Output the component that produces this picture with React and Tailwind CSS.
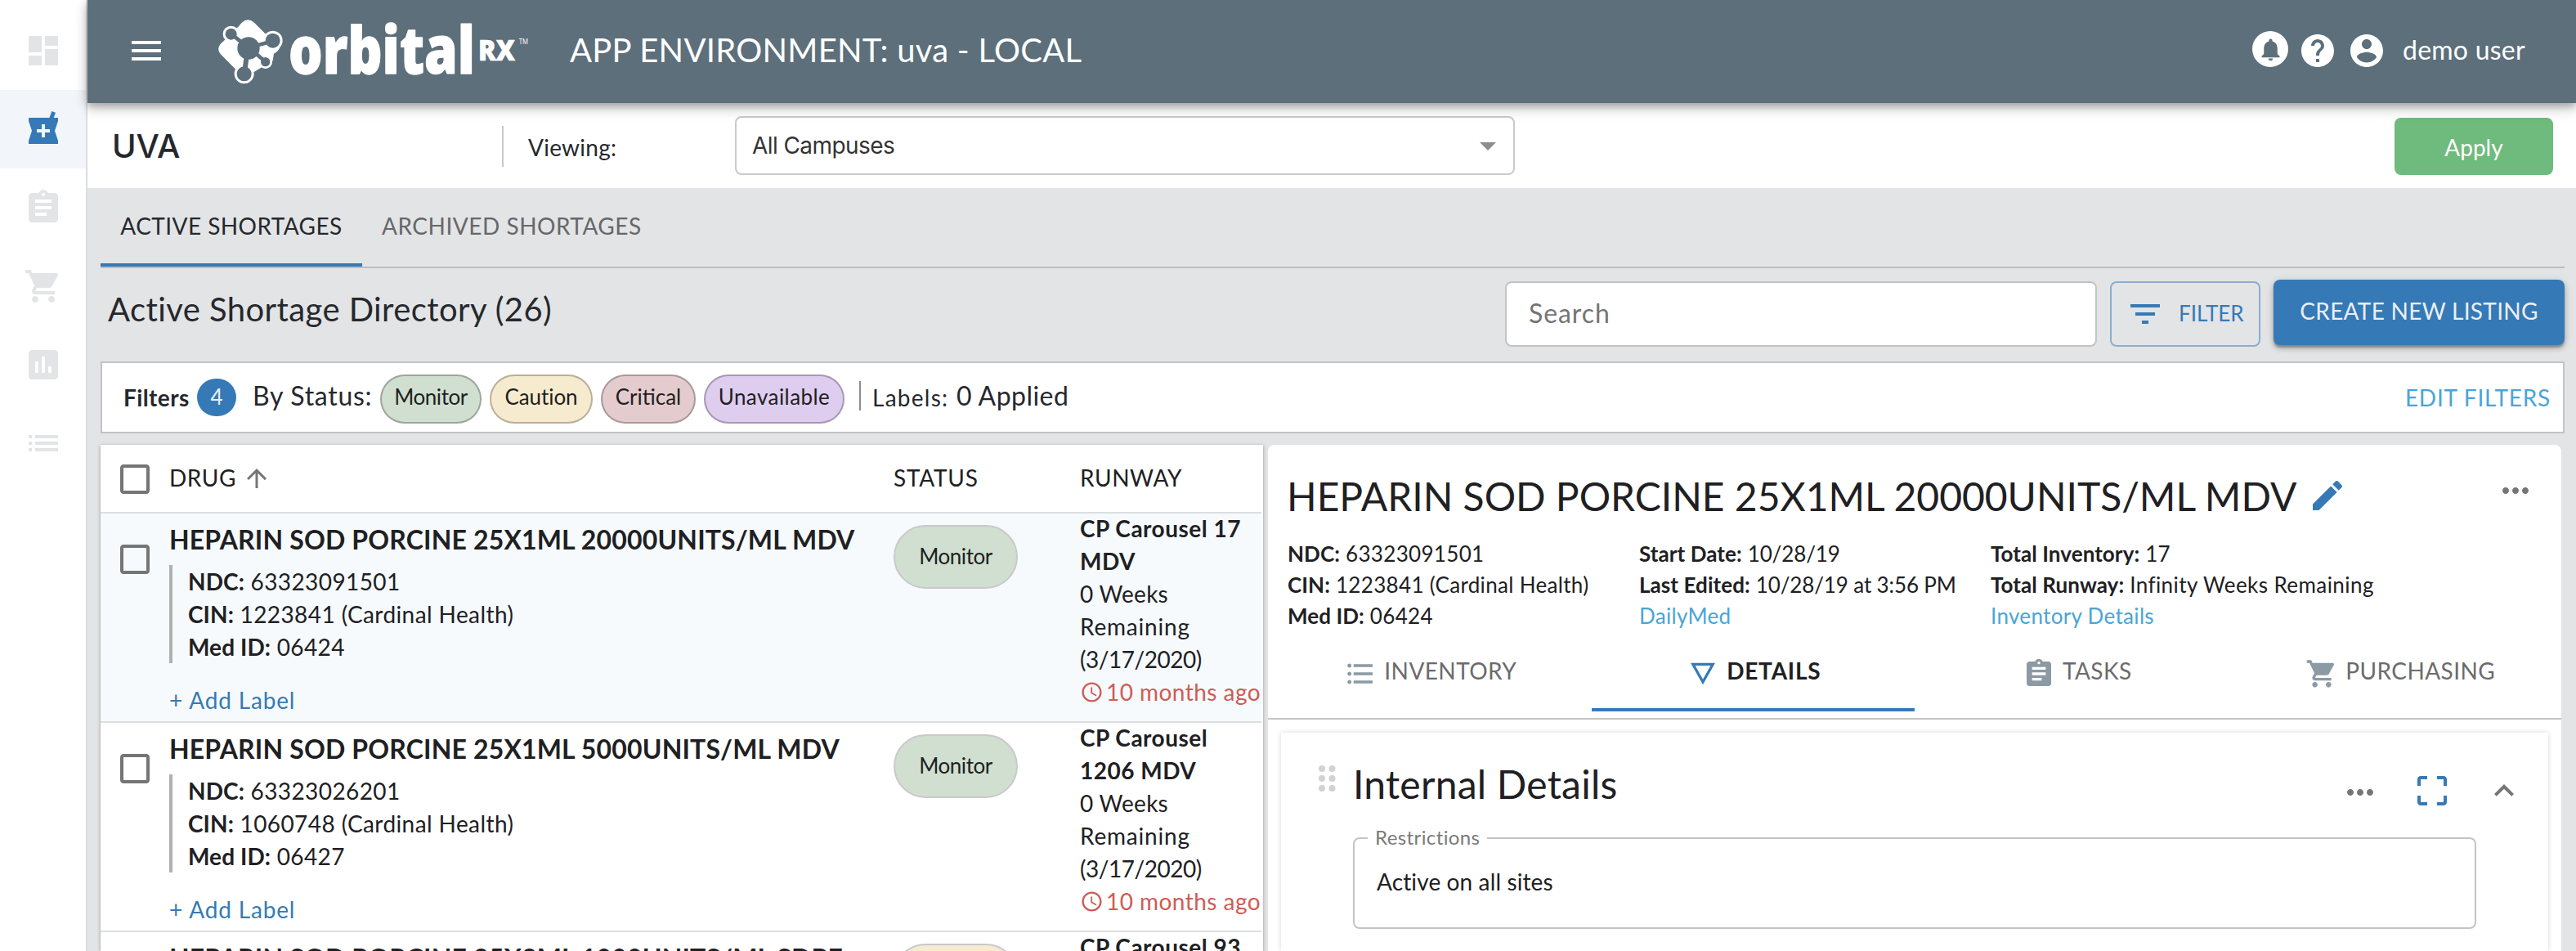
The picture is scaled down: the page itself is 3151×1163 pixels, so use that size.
import React from 'react';

const PATHS = {
  dashboard: 'M3 13h8V3H3v10zm0 8h8v-6H3v6zm10 0h8V11h-8v10zm0-18v6h8V3h-8z',
  pharmacy:
    'M21 5h-2.64l1.14-3.14L17.15 1l-1.46 4H3v2l2 6-2 6v2h18v-2l-2-6 2-6V5zm-5 9h-3v3h-2v-3H8v-2h3V9h2v3h3v2z',
  assignment:
    'M19 3h-4.18C14.4 1.84 13.3 1 12 1c-1.3 0-2.4.84-2.82 2H5c-1.1 0-2 .9-2 2v14c0 1.1.9 2 2 2h14c1.1 0 2-.9 2-2V5c0-1.1-.9-2-2-2zm-7 0c.55 0 1 .45 1 1s-.45 1-1 1-1-.45-1-1 .45-1 1-1zm2 14H7v-2h7v2zm3-4H7v-2h10v2zm0-4H7V7h10v2z',
  cart:
    'M7 18c-1.1 0-1.99.9-1.99 2S5.9 22 7 22s2-.9 2-2-.9-2-2-2zM1 2v2h2l3.6 7.59-1.35 2.45c-.16.28-.25.61-.25.96 0 1.1.9 2 2 2h12v-2H7.42c-.14 0-.25-.11-.25-.25l.03-.12.9-1.63h7.45c.75 0 1.41-.41 1.75-1.03l3.58-6.49c.08-.14.12-.31.12-.48 0-.55-.45-1-1-1H5.21l-.94-2H1zm16 16c-1.1 0-1.99.9-1.99 2s.89 2 1.99 2 2-.9 2-2-.9-2-2-2z',
  assessment:
    'M19 3H5c-1.1 0-2 .9-2 2v14c0 1.1.9 2 2 2h14c1.1 0 2-.9 2-2V5c0-1.1-.9-2-2-2zM9 17H7v-7h2v7zm4 0h-2V7h2v10zm4 0h-2v-4h2v4z',
  list: 'M3 13h2v-2H3v2zm0 4h2v-2H3v2zm0-8h2V7H3v2zm4 4h14v-2H7v2zm0 4h14v-2H7v2zM7 7v2h14V7H7z',
  menu: 'M3 18h18v-2H3v2zm0-5h18v-2H3v2zm0-7v2h18V6H3z',
  bell:
    'M12 22c1.1 0 2-.9 2-2h-4c0 1.1.89 2 2 2zm6-6v-5c0-3.07-1.64-5.64-4.5-6.32V4c0-.83-.67-1.5-1.5-1.5s-1.5.67-1.5 1.5v.68C7.63 5.36 6 7.92 6 11v5l-2 2v1h16v-1l-2-2z',
  help:
    'M12 2C6.48 2 2 6.48 2 12s4.48 10 10 10 10-4.48 10-10S17.52 2 12 2zm1 17h-2v-2h2v2zm2.07-7.75l-.9.92C13.45 12.9 13 13.5 13 15h-2v-.5c0-1.1.45-2.1 1.17-2.83l1.24-1.26c.37-.36.59-.86.59-1.41 0-1.1-.9-2-2-2s-2 .9-2 2H8c0-2.21 1.79-4 4-4s4 1.79 4 4c0 .88-.36 1.68-.93 2.25z',
  account:
    'M12 2C6.48 2 2 6.48 2 12s4.48 10 10 10 10-4.48 10-10S17.52 2 12 2zm0 3c1.66 0 3 1.34 3 3s-1.34 3-3 3-3-1.34-3-3 1.34-3 3-3zm0 14.2c-2.5 0-4.71-1.28-6-3.22.03-1.99 4-3.08 6-3.08 1.99 0 5.97 1.09 6 3.08-1.29 1.94-3.5 3.22-6 3.22z',
  caret: 'M7 10l5 5 5-5z',
  filter: 'M10 18h4v-2h-4v2zM3 6v2h18V6H3zm3 7h12v-2H6v2z',
  checkbox:
    'M19 5v14H5V5h14m0-2H5c-1.1 0-2 .9-2 2v14c0 1.1.9 2 2 2h14c1.1 0 2-.9 2-2V5c0-1.1-.9-2-2-2z',
  arrowUp: 'M4 12l1.41 1.41L11 7.83V20h2V7.83l5.58 5.59L20 12l-8-8-8 8z',
  clock:
    'M11.99 2C6.47 2 2 6.48 2 12s4.47 10 9.99 10C17.52 22 22 17.52 22 12S17.52 2 11.99 2zM12 20c-4.42 0-8-3.58-8-8s3.58-8 8-8 8 3.58 8 8-3.58 8-8 8zM12.5 7H11v6l5.25 3.15.75-1.23-4.5-2.67z',
  edit:
    'M3 17.25V21h3.75L17.81 9.94l-3.75-3.75L3 17.25zM20.71 7.04c.39-.39.39-1.02 0-1.41l-2.34-2.34c-.39-.39-1.02-.39-1.41 0l-1.83 1.83 3.75 3.75 1.83-1.83z',
  more:
    'M6 10c-1.1 0-2 .9-2 2s.9 2 2 2 2-.9 2-2-.9-2-2-2zm12 0c-1.1 0-2 .9-2 2s.9 2 2 2 2-.9 2-2-.9-2-2-2zm-6 0c-1.1 0-2 .9-2 2s.9 2 2 2 2-.9 2-2-.9-2-2-2z',
  bulleted:
    'M4 10.5c-.83 0-1.5.67-1.5 1.5s.67 1.5 1.5 1.5 1.5-.67 1.5-1.5-.67-1.5-1.5-1.5zm0-6c-.83 0-1.5.67-1.5 1.5S3.17 7.5 4 7.5 5.5 6.83 5.5 6 4.83 4.5 4 4.5zm0 12c-.83 0-1.5.68-1.5 1.5s.68 1.5 1.5 1.5 1.5-.68 1.5-1.5-.67-1.5-1.5-1.5zM7 19h14v-2H7v2zm0-6h14v-2H7v2zm0-8v2h14V5H7z',
  details: 'M3 4l9 16 9-16H3zm3.38 2h11.25L12 16 6.38 6z',
  cropFree:
    'M3 5v4h2V5h4V3H5c-1.1 0-2 .9-2 2zm2 10H3v4c0 1.1.9 2 2 2h4v-2H5v-4zm14 4h-4v2h4c1.1 0 2-.9 2-2v-4h-2v4zm0-16h-4v2h4v4h2V5c0-1.1-.9-2-2-2z',
  expandLess: 'M12 8l-6 6 1.41 1.41L12 10.83l4.59 4.58L18 14z',
};

function Icon({ name, className = 'size-12' }) {
  return (
    <svg viewBox="0 0 24 24" fill="currentColor" className={`shrink-0 ${className}`}>
      <path d={PATHS[name]} />
    </svg>
  );
}

function Logo() {
  return (
    <svg viewBox="0 0 1200 315" className="h-[105px] w-[400px] shrink-0" fill="#fff">
      <path d="M122 50Q145 30 168 50L214 96L262 140Q258 154 240 164L236 190L166 232L100 222L44 165Q29 147 44 128L66 108L112 62Z" />
      <circle cx="83" cy="92" r="30" />
      <circle cx="236" cy="116" r="36" />
      <circle cx="209" cy="194" r="25" />
      <circle cx="131" cy="238" r="36" />
      <g fill="#5c6f7b" stroke="#5c6f7b">
        <circle cx="147" cy="144" r="41" stroke="none" />
        <circle cx="83" cy="92" r="21" stroke="none" />
        <circle cx="236" cy="116" r="27" stroke="none" />
        <circle cx="209" cy="194" r="17" stroke="none" />
        <circle cx="131" cy="238" r="27" stroke="none" />
        <path d="M90 97L122 122M175 134L225 121M172 162L203 188" strokeWidth="14" />
        <path d="M139 180L134 220" strokeWidth="18" />
      </g>
      <text x="294" y="237" fontFamily="Open Sans" fontWeight="800" fontSize="238" textLength="684" lengthAdjust="spacingAndGlyphs" stroke="#fff" strokeWidth="4" strokeLinejoin="round">
        orbital
      </text>
      <text x="990" y="188" fontFamily="Open Sans" fontWeight="800" fontSize="106" textLength="135" lengthAdjust="spacingAndGlyphs" stroke="#fff" strokeWidth="2">
        RX
      </text>
      <text x="1139" y="128" fontFamily="Open Sans" fontSize="25" textLength="34" lengthAdjust="spacingAndGlyphs">
        TM
      </text>
    </svg>
  );
}

const NAV = ['dashboard', 'pharmacy', 'assignment', 'cart', 'assessment', 'list'];

function Sidebar() {
  return (
    <nav className="flex w-[107px] shrink-0 flex-col border-r-2 border-[#dcdddf] bg-white pt-[14px]">
      {NAV.map((name) => (
        <div
          key={name}
          className={`flex h-24 items-center justify-center ${
            name === 'pharmacy' ? 'bg-[#f2f6fa] text-[#357ab6]' : 'text-[#e3e4e6]'
          }`}
        >
          <Icon name={name} />
        </div>
      ))}
    </nav>
  );
}

function Header() {
  return (
    <header className="z-10 flex h-[126px] shrink-0 items-center bg-[#5c6f7b] pl-12 text-white shadow-[0_4px_8px_rgba(0,0,0,0.2),0_8px_16px_rgba(0,0,0,0.14),0_2px_16px_rgba(0,0,0,0.12)]">
      <Icon name="menu" className="mb-[2px] size-12" />
      <div className="ml-[52px]">
        <Logo />
      </div>
      <h1 className="ml-[42px] pb-[5px] text-[40px] leading-[48px] tracking-[0.0062em] whitespace-nowrap">
        APP ENVIRONMENT: uva - LOCAL
      </h1>
      <div className="ml-auto flex items-center pr-[61px]">
        <div className="mb-[6px] flex size-11 items-center justify-center rounded-full bg-white text-[#5c6f7b]">
          <Icon name="bell" className="size-[33px]" />
        </div>
        <Icon name="help" className="mb-[2px] ml-3 size-12" />
        <Icon name="account" className="mb-[2px] ml-3 size-12" />
        <span className="ml-[20px] w-[151px] pb-[5px] text-[32px] leading-10 tracking-[0.0076em] whitespace-nowrap">demo user</span>
      </div>
    </header>
  );
}

function Toolbar() {
  return (
    <div className="flex h-[104px] shrink-0 items-center bg-white text-[28px]">
      <div className="ml-[30px] w-[477px] pt-[2px] font-['Inter'] text-[40px] leading-[48px] font-medium text-[#25282d]">UVA</div>
      <div className="mt-[2px] h-[50px] w-[2px] bg-[#c8c9cb]" />
      <div className="ml-[30px] w-[253px] pt-[3px] tracking-[0.009em] text-[#25282d]">Viewing:</div>
      <div className="flex h-[72px] w-[954px] items-center justify-between rounded-lg border-2 border-[#cacaca] pr-[7px] pl-[19px] text-[#333]">
        <span className="font-['Inter'] tracking-[-0.0203em]">All Campuses</span>
        <Icon name="caret" className="size-12 text-[#8d8d8d]" />
      </div>
      <button className="mt-[2px] mr-7 ml-auto h-[70px] w-[194px] rounded-lg bg-[#6fba7d] pt-px text-white">Apply</button>
    </div>
  );
}

function PageTabs() {
  return (
    <div className="flex h-[98px] border-b-2 border-[#bcbdbf] text-[28px] whitespace-nowrap">
      <div className="flex w-[320px] items-center justify-center border-b-4 border-[#357ab6] tracking-[0.0152em] text-[#25282d]">
        ACTIVE SHORTAGES
      </div>
      <div className="flex items-center border-b-4 border-transparent pl-6 tracking-[0.0183em] text-[#66676a]">
        ARCHIVED SHORTAGES
      </div>
    </div>
  );
}

function DirectoryBar() {
  return (
    <div className="flex h-[114px] items-start whitespace-nowrap">
      <h2 className="pt-[25px] pl-[9px] text-[40px] leading-[50px] tracking-[0.0104em] text-[#25282d]">
        Active Shortage Directory (26)
      </h2>
      <div className="mt-4 ml-auto flex h-20 w-[724px] items-center rounded-lg border-2 border-[#c3c3c5] bg-white pb-[2px] pl-[27px] text-[32px] tracking-[0.029em] text-[#757575]">
        Search
      </div>
      <button className="mt-4 ml-4 flex h-20 w-[184px] items-center rounded-lg border-2 border-[#8aaed1] pl-[17px] text-[26px] text-[#357ab6]">
        <Icon name="filter" />
        <span className="ml-[17px] pb-[2px]">FILTER</span>
      </button>
      <button className="mt-[14px] ml-4 h-20 w-[356px] rounded-lg bg-[#357ab6] pb-[4px] text-[28px] tracking-[0.0102em] text-[#eceef1] shadow-[0_3px_2px_rgba(0,0,0,0.22),0_4px_6px_rgba(0,0,0,0.2),0_2px_12px_rgba(0,0,0,0.12)]">
        CREATE NEW LISTING
      </button>
    </div>
  );
}

function FilterBar() {
  const chip = 'mt-1 flex h-[60px] items-center justify-center rounded-full border-2 border-black/25 pb-[6px] text-[26px] text-[#1f1f1f]';
  return (
    <div className="flex h-[88px] items-center border-2 border-[#c3c3c5] bg-white pl-[26px] text-[#25282d] whitespace-nowrap">
      <span className="w-[90px] text-[28px] font-bold tracking-[0.0146em]">Filters</span>
      <span className="flex h-[46px] w-12 items-center justify-center rounded-full bg-[#357ab6] pb-[2px] text-[26px] text-[#e8eef4]">4</span>
      <span className="ml-[20px] w-[156px] pb-[4px] text-[32px] leading-10 tracking-[0.022em]">By Status:</span>
      <span className={`${chip} w-[124px] bg-[#d0dfd0] tracking-[-0.018em]`}>Monitor</span>
      <span className={`${chip} ml-[10px] w-[126px] bg-[#f6ebce] tracking-[-0.0035em]`}>Caution</span>
      <span className={`${chip} ml-[10px] w-[116px] bg-[#e4cbcd]`}>Critical</span>
      <span className={`${chip} ml-[10px] w-[172px] bg-[#decdee] tracking-[0.0168em]`}>Unavailable</span>
      <span className="mb-1 ml-[18px] h-9 w-[2px] bg-[#8c8d90]" />
      <span className="ml-[14px] w-[103px] pb-px text-[28px] tracking-[0.045em]">Labels:</span>
      <span className="pb-[4px] text-[32px] leading-10 tracking-[0.0142em]">0 Applied</span>
      <span className="mr-[15px] ml-auto pb-px text-[28px] tracking-[0.027em] text-[#4aa5d6]">EDIT FILTERS</span>
    </div>
  );
}

const DRUGS = [
  {
    title: 'HEPARIN SOD PORCINE 25X1ML 20000UNITS/ML MDV',
    ndc: '63323091501', cin: '1223841 (Cardinal Health)', med: '06424',
    status: 'Monitor', runway: ['CP Carousel 17', 'MDV'], selected: true,
  },
  {
    title: 'HEPARIN SOD PORCINE 25X1ML 5000UNITS/ML MDV',
    ndc: '63323026201', cin: '1060748 (Cardinal Health)', med: '06427',
    status: 'Monitor', runway: ['CP Carousel', '1206 MDV'],
  },
  {
    title: 'HEPARIN SOD PORCINE 25X2ML 1000UNITS/ML SDPF',
    status: 'Caution', runway: ['CP Carousel 93'],
  },
];

function Field({ label, children }) {
  return (
    <div>
      <b className="tracking-[0.003em]">{label}:</b> {children}
    </div>
  );
}

function DrugRow({ drug }) {
  return (
    <div
      className={`flex h-64 w-[1420px] shrink-0 items-start border-b-2 border-[#dcdee0] pl-[18px] text-[28px] leading-10 whitespace-nowrap ${
        drug.selected ? 'bg-[#f6fafd]' : 'bg-white'
      }`}
    >
      <Icon name="checkbox" className="mt-8 size-12 text-[#757575]" />
      <div className="ml-[18px] w-[886px] pt-3">
        <div className="text-[32px] leading-10 font-bold tracking-[0.0048em]">{drug.title}</div>
        {drug.ndc && (
          <>
            <div className="mt-3 h-[120px] border-l-4 border-[#b0b0b0] pl-[19px] tracking-[0.0145em]">
              <div className="-mt-px">
                <Field label="NDC">{drug.ndc}</Field>
                <Field label="CIN">{drug.cin}</Field>
                <Field label="Med ID">{drug.med}</Field>
              </div>
            </div>
            <div className="mt-[25px] tracking-[0.03em] text-[#357ab6]">+ Add Label</div>
          </>
        )}
      </div>
      <div className="w-[228px] pt-[14px]">
        <div
          className={`flex h-[78px] w-[152px] items-center justify-center rounded-full border-2 border-[#c9c9ca] pb-[3px] text-[26px] tracking-[-0.018em] ${
            drug.status === 'Monitor' ? 'bg-[#d0dfd0]' : 'bg-[#f6ebce]'
          }`}
        >
          {drug.ndc && drug.status}
        </div>
      </div>
      <div className="-mt-[2px]">
        {drug.runway.map((line) => (
          <div key={line} className="font-bold tracking-[0.0177em]">
            {line}
          </div>
        ))}
        {drug.ndc && (
          <>
            <div className="tracking-[0.008em]">0 Weeks</div>
            <div className="tracking-[0.0288em]">Remaining</div>
            <div className="tracking-[-0.0165em]">(3/17/2020)</div>
            <div className="flex items-center tracking-[0.0164em] text-[#cf5c55]">
              <Icon name="clock" className="mt-px size-[29px]" />
              <span className="ml-[3px]">10 months ago</span>
            </div>
          </>
        )}
      </div>
    </div>
  );
}

function DrugList() {
  return (
    <section className="flex w-[1422px] shrink-0 flex-col overflow-hidden bg-white text-[#202022] shadow-[0_1px_4px_rgba(0,0,0,0.35)]">
      <div className="flex h-[84px] w-[1420px] shrink-0 items-center border-b-2 border-[#dcdee0] pl-[18px] text-[28px]">
        <Icon name="checkbox" className="mt-[2px] size-12 text-[#757575]" />
        <span className="ml-[18px] w-[84px] pb-[2px] tracking-[0.02em]">DRUG</span>
        <Icon name="arrowUp" className="ml-[5px] size-9 text-[#757575]" />
        <span className="mr-auto ml-[761px] w-[228px] pb-[2px] tracking-[0.0273em]">STATUS</span>
        <span className="w-[222px] pb-[2px] tracking-[0.02em]">RUNWAY</span>
      </div>
      {DRUGS.map((d) => (
        <DrugRow key={d.title} drug={d} />
      ))}
    </section>
  );
}

const DETAIL_TABS = [
  ['bulleted', 'INVENTORY'],
  ['details', 'DETAILS'],
  ['assignment', 'TASKS'],
  ['cart', 'PURCHASING'],
];

function DetailPanel() {
  return (
    <section className="flex w-[1582px] shrink-0 flex-col rounded-t-lg bg-white text-[#202022]">
      <div className="h-[336px] shrink-0 border-b-2 border-[#c4c4c4] whitespace-nowrap">
        <div className="flex h-[114px] items-start pt-[31px] pl-[23px]">
          <h2 className="pt-[2px] text-[48px] leading-[60px] tracking-[-0.0003em]">HEPARIN SOD PORCINE 25X1ML 20000UNITS/ML MDV</h2>
          <Icon name="edit" className="mt-[7px] ml-[14px] size-12 text-[#357ab6]" />
          <Icon name="more" className="mt-[1px] mr-[32px] ml-auto size-12 text-[#757575]" />
        </div>
        <div className="flex pl-6 text-[26px] leading-[38px] tracking-[0.0125em]">
          <div className="w-[430px]">
            <Field label="NDC">63323091501</Field>
            <Field label="CIN">1223841 (Cardinal Health)</Field>
            <Field label="Med ID">06424</Field>
          </div>
          <div className="w-[430px]">
            <Field label="Start Date"><span className="tracking-[-0.005em]">10/28/19</span></Field>
            <Field label="Last Edited"><span className="tracking-[-0.005em]">10/28/19 at 3:56 PM</span></Field>
            <div className="text-[#4aa5d6]">DailyMed</div>
          </div>
          <div>
            <Field label="Total Inventory">17</Field>
            <Field label="Total Runway"><span className="tracking-[0.0165em]">Infinity Weeks Remaining</span></Field>
            <div className="text-[#4aa5d6]">Inventory Details</div>
          </div>
        </div>
        <div className="mt-[10px] flex h-[88px] text-[28px]">
          {DETAIL_TABS.map(([icon, label]) => {
            const active = icon === 'details';
            return (
              <div
                key={label}
                className={`flex w-[396px] items-center justify-center gap-[9px] border-b-4 pl-[2px] ${
                  active ? 'border-[#357ab6] font-bold' : 'border-transparent'
                }`}
              >
                <Icon name={icon} className={active ? 'size-10 text-[#357ab6]' : 'size-10 text-[#8b9aa3]'} />
                <span className={active ? 'pb-[8px] tracking-[0.0267em]' : 'pb-[8px] tracking-[0.015em] text-[#6b6b6b]'}>{label}</span>
              </div>
            );
          })}
        </div>
      </div>
      <div className="mx-4 mt-4 grow bg-white shadow-[0_0_6px_rgba(0,0,0,0.16)]">
        <div className="flex h-[116px] items-start pt-[31px] pr-[30px] pl-[46px]">
          <svg viewBox="0 0 21 32" className="mt-[9px] h-8 w-[21px]" fill="#d2d2d2">
            {[4, 16, 28].map((y) => (
              <g key={y}>
                <circle cx="4" cy={y} r="4" />
                <circle cx="16.5" cy={y} r="4" />
              </g>
            ))}
          </svg>
          <h3 className="ml-[21px] pt-[2px] text-[48px] leading-[60px] tracking-[0.005em]">Internal Details</h3>
          <div className="mt-[15px] ml-auto flex items-center gap-10 text-[#757575]">
            <Icon name="more" className="mt-[3px] size-12" />
            <Icon name="cropFree" className="mb-px size-12 text-[#357ab6]" />
            <Icon name="expandLess" className="mb-[2px] size-12" />
          </div>
        </div>
        <fieldset className="ml-[88px] h-[124px] w-[1374px] rounded-lg border-2 border-[#c4c4c4] pl-4">
          <legend className="h-[26px] w-[146px] pl-[9px] text-[24px] leading-[23px] tracking-[0.0164em] text-[#7a7a7a]">
            Restrictions
          </legend>
          <div className="mt-5 pl-[11px] text-[28px] leading-10 tracking-[0.0044em]">Active on all sites</div>
        </fieldset>
      </div>
    </section>
  );
}

export default function App() {
  return (
    <div className="flex h-[1163px] w-[3151px] overflow-hidden bg-[#e3e4e6] font-['Lato',sans-serif]">
      <Sidebar />
      <div className="flex min-w-0 grow flex-col">
        <Header />
        <Toolbar />
        <main className="flex min-h-0 grow flex-col pr-[14px] pl-4">
          <div className="shrink-0">
            <PageTabs />
            <DirectoryBar />
            <FilterBar />
          </div>
          <div className="mt-[14px] flex min-h-0 grow gap-[6px]">
            <DrugList />
            <DetailPanel />
          </div>
        </main>
      </div>
    </div>
  );
}
